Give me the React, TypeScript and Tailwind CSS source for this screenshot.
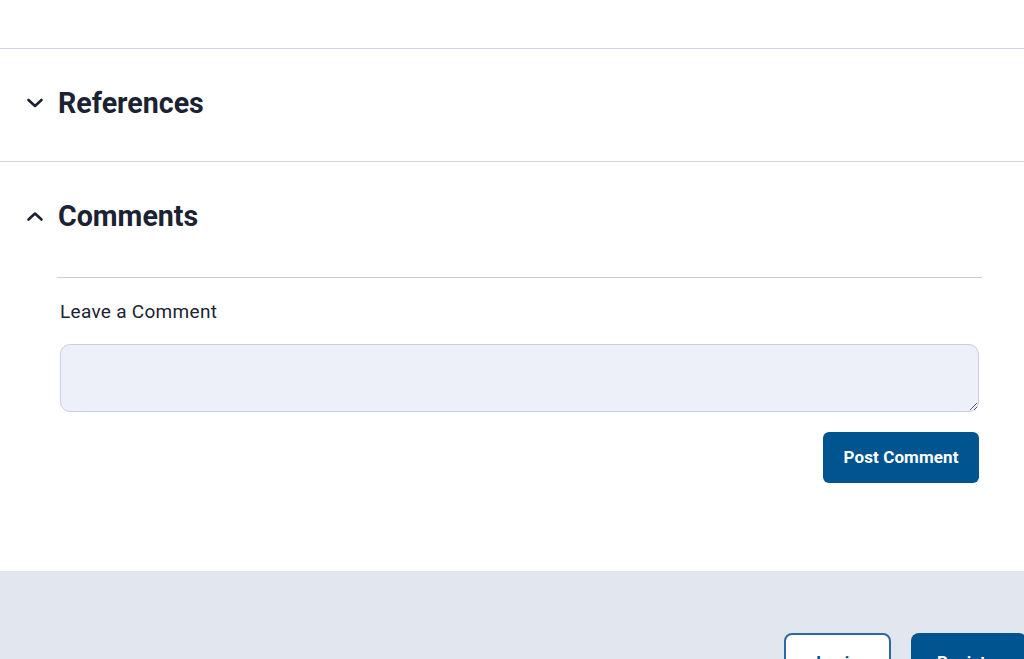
import React from "react";

function Chevron({ up }: { up?: boolean }) {
  return (
    <svg width="18" height="12" viewBox="0 0 18 12" fill="none" className="shrink-0">
      {up ? (
        <path d="M2.5 9.5L9 3.5L15.5 9.5" stroke="#1b2233" strokeWidth="2.6" strokeLinecap="round" strokeLinejoin="round" />
      ) : (
        <path d="M2.5 3L9 9L15.5 3" stroke="#1b2233" strokeWidth="2.6" strokeLinecap="round" strokeLinejoin="round" />
      )}
    </svg>
  );
}

export default function App() {
  return (
    <div className="w-[1024px] h-[659px] overflow-hidden bg-white text-[#1b2233]" style={{ fontFamily: "Roboto, 'Liberation Sans', sans-serif" }}>
      <div className="h-[49px] border-b border-[#d0d4e3]" />
      <div className="h-[113px] border-b border-[#d0d4e3] flex items-center pl-[26px] pb-[4px] gap-[14px]">
        <Chevron />
        <h2 className="text-[28.6px] font-bold leading-none">References</h2>
      </div>
      <div className="h-[108px] flex items-center pl-[26px] gap-[14px]">
        <Chevron up />
        <h2 className="text-[28.6px] font-bold leading-none">Comments</h2>
      </div>
      <div className="ml-[57px] mr-[42px] mt-[7px] border-t border-[#c8ccd9] px-[3px] flex flex-col pb-[88px]">
        <label className="mt-[20px] text-[19px] leading-[27px] tracking-[0.3px] text-[#1b2233]">Leave a Comment</label>
        <textarea className="mt-[19px] h-[68px] w-full rounded-[10px] border border-[#c9cee0] bg-[#edf0f9] outline-none resize-y" />
        <button className="mt-[20px] self-end h-[51px] w-[156px] rounded-[6px] bg-[#00548f] text-white text-[17px] font-bold tracking-[0.1px]">
          Post Comment
        </button>
      </div>
      <div className="bg-[#e2e6ef] h-[200px] pt-[62px] pl-[784px] flex gap-[20px]">
        <button className="shrink-0 h-[60px] w-[107px] rounded-[8px] border-2 border-[#2f67a1] bg-white text-[#00548f] text-[17px] font-bold">
          Login
        </button>
        <button className="shrink-0 h-[60px] w-[116px] rounded-[8px] bg-[#00548f] text-white text-[17px] font-bold">
          Register
        </button>
      </div>
    </div>
  );
}
